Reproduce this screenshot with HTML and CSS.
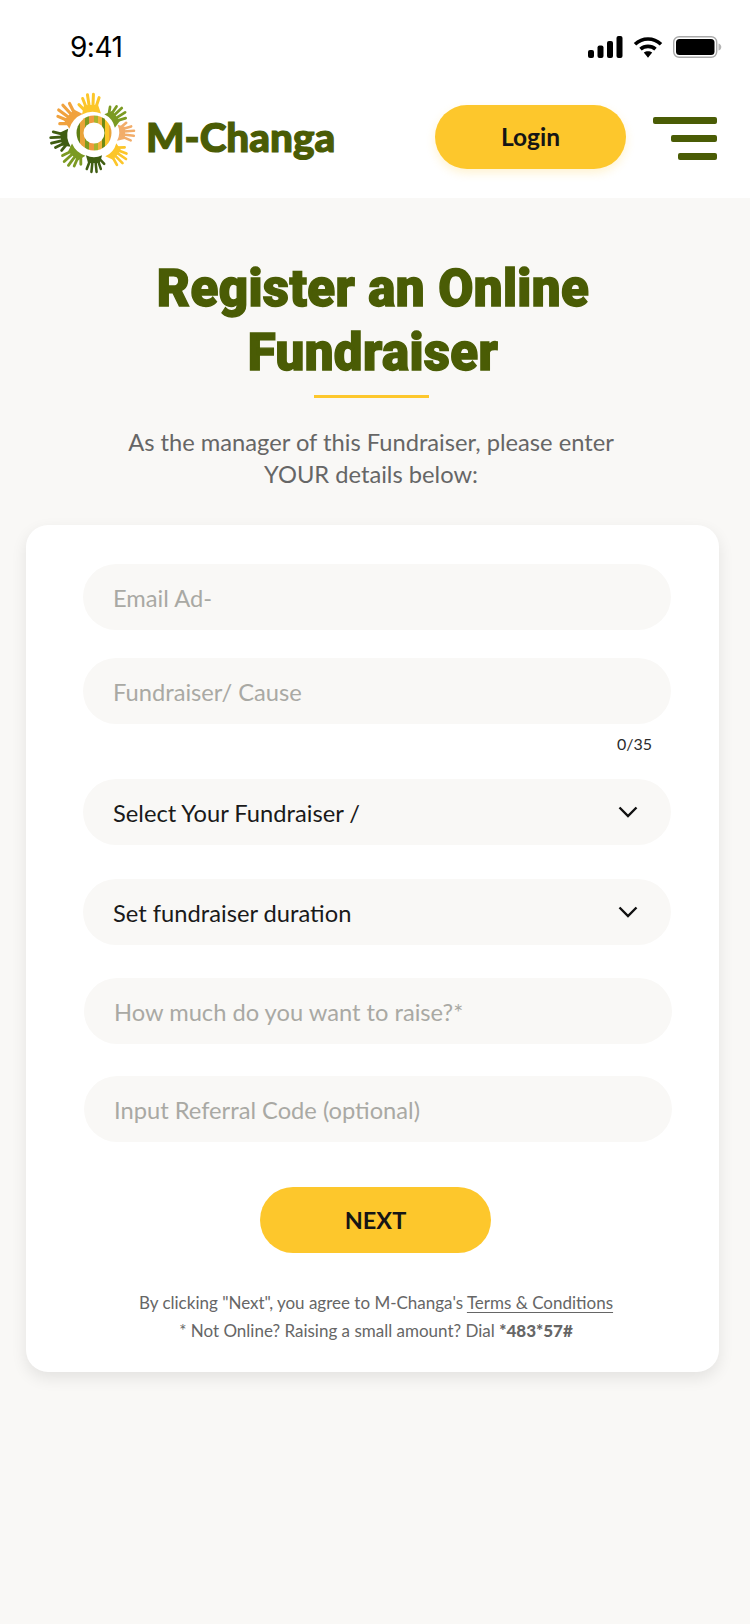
FILE: index.html
```html
<!DOCTYPE html>
<html lang="en">
<head>
<meta charset="utf-8">
<title>M-Changa - Register an Online Fundraiser</title>
<link rel="stylesheet" href="styles.css">
</head>
<body>
<div class="top">
  <div class="status">
    <span class="time">9:41</span>
    <div class="status-icons">
      <svg class="signal" viewBox="0 0 35 22" width="35" height="22"><rect x="0" y="14" width="6" height="8" rx="2"/><rect x="9.500" y="9.500" width="6" height="12.500" rx="2"/><rect x="19" y="5" width="6" height="17" rx="2"/><rect x="28.500" y="0" width="6" height="22" rx="2"/></svg>
      <svg class="wifi" viewBox="0 0 30 22" width="30" height="22"><path d="M2 8.200C9.500 1.200 20.500 1.200 28 8.200" fill="none" stroke="#000" stroke-width="3.600"/><path d="M7.500 13.200C11.800 9.400 18.200 9.400 22.500 13.200" fill="none" stroke="#000" stroke-width="3.600"/><path d="M10.800 16.600C13.300 14.700 16.700 14.700 19.200 16.600L15 21.800Z"/></svg>
      <svg class="battery" viewBox="0 0 49 22" width="49" height="22"><rect x="0.700" y="0.700" width="43" height="20.600" rx="5.500" fill="none" stroke="#a9a9a9" stroke-width="1.400"/><rect x="3" y="3" width="38.500" height="16" rx="3.500"/><path d="M45.500 7.500C47.500 8 48.300 9.500 48.300 11C48.300 12.500 47.500 14 45.500 14.500Z" fill="#b5b5b5"/></svg>
    </div>
  </div>
  <header class="header">
    <div class="brand">
      <svg class="logo-mark" viewBox="0 0 105 100" width="105" height="100">
        <defs>
          <g id="hand">
            <path d="M-9.500 9Q0 4.500 9.500 9L7 0L-7 0Z"/>
            <path d="M-5 2L-8 -7M-1.800 2L-3 -10.500M1.800 2L3 -10.500M5 2L8.500 -7M-6.500 5L-12 -1" fill="none" stroke="currentColor" stroke-width="3" stroke-linecap="round"/>
          </g>
          <clipPath id="ring-clip"><circle cx="54" cy="48" r="17.500"/></clipPath>
        </defs>
        <use href="#hand" class="hand-yellow" transform="translate(51 20) rotate(-3) scale(1)"/>
        <use href="#hand" class="hand-orange" transform="translate(29 30) rotate(-48) scale(1.050)"/>
        <use href="#hand" class="hand-green" transform="translate(76 31) rotate(52) scale(.9)"/>
        <use href="#hand" class="hand-peach" transform="translate(85 48) rotate(92) scale(.85)"/>
        <use href="#hand" class="hand-yellow" transform="translate(77 70) rotate(130) scale(.9)"/>
        <use href="#hand" class="hand-dark" transform="translate(54 78) rotate(180) scale(.85)"/>
        <use href="#hand" class="hand-green" transform="translate(33 71) rotate(222) scale(.95)"/>
        <use href="#hand" class="hand-dark" transform="translate(21 54) rotate(-98) scale(.95)"/>
        <g clip-path="url(#ring-clip)">
          <rect x="34" y="28" width="6" height="40" fill="#5f7f12"/>
          <rect x="40" y="28" width="5" height="40" fill="#e9a33a"/>
          <rect x="45" y="28" width="4" height="40" fill="#7f9a1f"/>
          <rect x="49" y="28" width="5" height="40" fill="#f09a3e"/>
          <rect x="54" y="28" width="4" height="40" fill="#a8b52c"/>
          <rect x="58" y="28" width="4" height="40" fill="#f3b33b"/>
          <rect x="62" y="28" width="3" height="40" fill="#6d8a14"/>
          <rect x="65" y="28" width="4" height="40" fill="#fcc62a"/>
          <rect x="69" y="28" width="6" height="40" fill="#e9a33a"/>
        </g>
        <circle class="ring-hole" cx="54" cy="48" r="10.500"/>
      </svg>
      <span class="wordmark">M-Changa</span>
    </div>
    <div class="header-actions">
      <a class="login">Login</a>
      <div class="menu" aria-label="Menu"><i class="bar bar-l"></i><i class="bar bar-m"></i><i class="bar bar-s"></i></div>
    </div>
  </header>
</div>
<main class="main">
  <h1 class="title">Register an Online<br>Fundraiser</h1>
  <div class="rule"></div>
  <p class="intro">As the manager of this Fundraiser, please enter<br>YOUR details below:</p>
  <section class="card">
    <div class="field placeholder">Email Ad-</div>
    <div class="field placeholder gap-cause">Fundraiser/ Cause</div>
    <div class="counter">0/35</div>
    <div class="field select gap-select"><span>Select Your Fundraiser /</span><svg class="chev" viewBox="0 0 20 12" width="20" height="12"><path d="M1.500 1.500L10 10L18.500 1.500"/></svg></div>
    <div class="field select gap-duration"><span>Set fundraiser duration</span><svg class="chev" viewBox="0 0 20 12" width="20" height="12"><path d="M1.500 1.500L10 10L18.500 1.500"/></svg></div>
    <div class="field placeholder shifted gap-raise">How much do you want to raise?*</div>
    <div class="field placeholder shifted gap-code">Input Referral Code (optional)</div>
    <a class="next">NEXT</a>
    <p class="legal">By clicking "Next", you agree to M-Changa's <a class="terms">Terms &amp; Conditions</a></p>
    <p class="legal legal-2">* Not Online? Raising a small amount? Dial <b>*483*57#</b></p>
  </section>
</main>
</body>
</html>
```
FILE: styles.css
```css
* { box-sizing: border-box; }
html, body { margin: 0; padding: 0; }
body {
  width: 750px;
  height: 1624px;
  overflow: hidden;
  background: #f9f8f6;
  font-family: "Lato", "Open Sans", sans-serif;
  color: #5f5f5f;
}
.top { background: #fff; height: 198px; }
.status {
  height: 84px;
  display: flex;
  justify-content: space-between;
  align-items: center;
  padding: 10px 28px 0 70px;
}
.time { font-family: "Inter", sans-serif; font-size: 28px; font-weight: 400; color: #000; letter-spacing: -.5px; }
.status-icons { display: flex; align-items: center; gap: 10px; }
.status-icons svg { display: block; fill: #000; }
.header {
  height: 114px;
  display: flex;
  align-items: flex-start;
  justify-content: space-between;
  padding: 1px 33px 0 40px;
}
.brand { display: flex; align-items: center; gap: 1px; }
.logo-mark { display: block; }
.hand-yellow { color: #fcc62a; fill: #fcc62a; }
.hand-orange { color: #f0a23e; fill: #f0a23e; }
.hand-green { color: #7b9a22; fill: #7b9a22; }
.hand-peach { color: #f2ad6a; fill: #f2ad6a; }
.hand-dark { color: #3f5d12; fill: #3f5d12; }
.ring-hole { fill: #fff; }
.wordmark {
  font-family: "Lato", sans-serif;
  font-weight: 900;
  font-size: 40.500px;
  letter-spacing: 0;
  color: #4a5c05;
  -webkit-text-stroke: 1.200px #4a5c05;
  position: relative;
  top: 1px;
}
.header-actions { display: flex; align-items: flex-start; gap: 27px; padding-top: 20px; }
.login {
  width: 191px;
  height: 64px;
  border-radius: 32px;
  background: #fdc72c;
  box-shadow: 0 4px 10px rgba(253, 199, 44, .22);
  display: flex;
  align-items: center;
  justify-content: center;
  padding-bottom: 2px;
  font-size: 24.500px;
  font-weight: 700;
  color: #151515;
}
.menu { width: 64px; display: flex; flex-direction: column; align-items: flex-end; gap: 11px; padding-top: 12px; }
.bar { display: block; height: 7px; background: #4a5c05; border-radius: 2px; }
.bar-l { width: 64px; }
.bar-m { width: 46px; }
.bar-s { width: 39px; }
.main { display: flex; flex-direction: column; align-items: center; }
.title {
  margin: 59px 4px 0 0;
  font-family: "Roboto", sans-serif;
  font-weight: 900;
  font-size: 51px;
  line-height: 64px;
  letter-spacing: .4px;
  color: #4a5c05;
  text-align: center;
  -webkit-text-stroke: 1.400px #4a5c05;
}
.rule { width: 115px; height: 3px; background: #fdc72c; margin-top: 10px; margin-left: -8px; }
.intro { margin: 28px 8px 0 0; font-size: 23.700px; line-height: 32px; text-align: center; color: #666; }
.card {
  align-self: flex-start;
  margin: 35px 0 0 26px;
  width: 693px;
  height: 847px;
  background: #fff;
  border-radius: 22px;
  box-shadow: 0 6px 16px rgba(0, 0, 0, .09);
  padding: 39px 0 0 57px;
}
.field {
  width: 588px;
  height: 66px;
  border-radius: 33px;
  background: #f9f8f6;
  display: flex;
  align-items: center;
  justify-content: space-between;
  padding: 2px 33px 0 30px;
  font-size: 23.700px;
}
.placeholder { color: #a9a9a4; }
.select { color: #1a1a1a; }
.shifted { margin-left: 1px; }
.gap-cause { margin-top: 28px; }
.gap-select { margin-top: 24px; }
.gap-duration { margin-top: 34px; }
.gap-raise { margin-top: 33px; }
.gap-code { margin-top: 32px; }
.counter { width: 569px; text-align: right; margin-top: 9px; height: 22px; font-size: 16px; line-height: 22px; color: #2b2b2b; }
.chev { display: block; margin-top: -2px; }
.chev path { fill: none; stroke: #111; stroke-width: 2.400; }
.next {
  display: flex;
  align-items: center;
  justify-content: center;
  width: 231px;
  height: 66px;
  border-radius: 33px;
  background: #fdc72c;
  margin: 45px 0 0 177px;
  font-size: 23.500px;
  font-weight: 700;
  color: #151515;
}
.legal {
  width: 586px;
  margin: 39px 0 0 0;
  font-size: 17px;
  line-height: 22px;
  text-align: center;
  color: #666;
}
.legal b { font-weight: 900; }
.legal-2 { margin-top: 6px; }
.terms { text-decoration: underline; text-underline-offset: 3px; }
```
